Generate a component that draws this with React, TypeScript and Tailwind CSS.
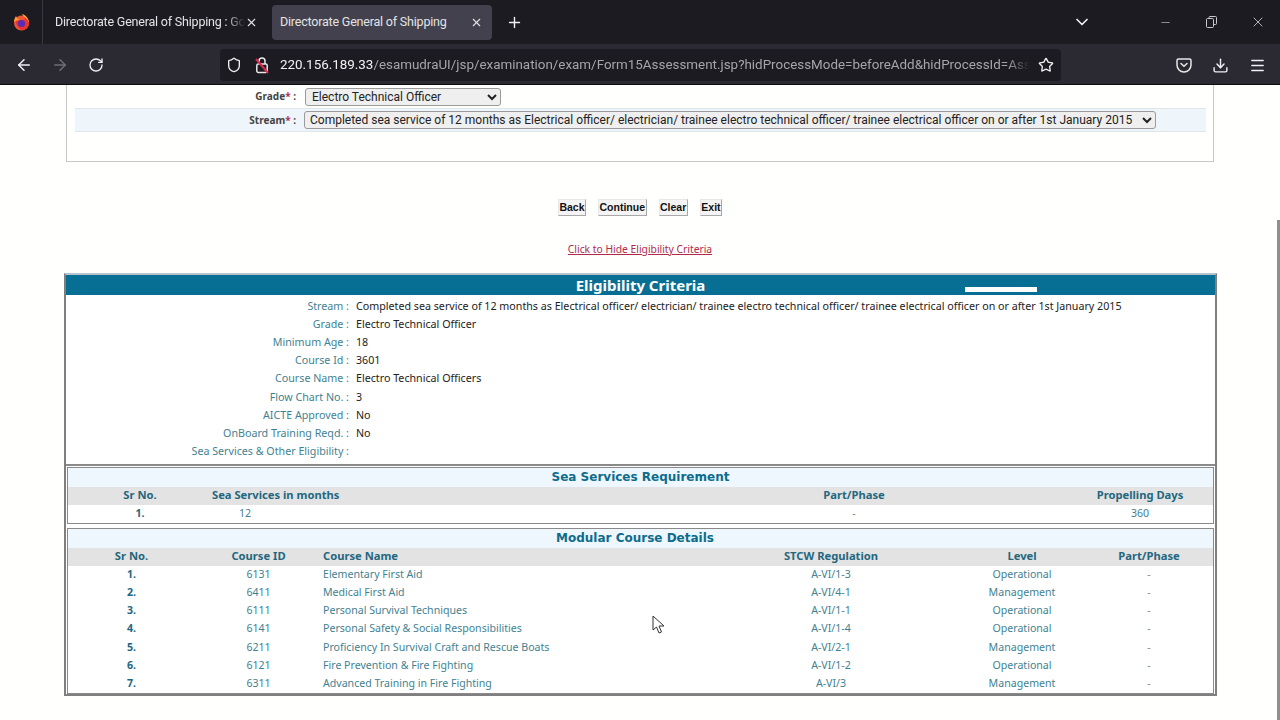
import { ArrowLeft, ArrowRight, RotateCw, Shield, Star, Download, Menu, X, Plus, ChevronDown, Minus } from 'lucide-react';

const details = [
  { label: 'Stream', value: 'Completed sea service of 12 months as Electrical officer/ electrician/ trainee electro technical officer/ trainee electrical officer on or after 1st January 2015' },
  { label: 'Grade', value: 'Electro Technical Officer' },
  { label: 'Minimum Age', value: '18' },
  { label: 'Course Id', value: '3601' },
  { label: 'Course Name', value: 'Electro Technical Officers' },
  { label: 'Flow Chart No.', value: '3' },
  { label: 'AICTE Approved', value: 'No' },
  { label: 'OnBoard Training Reqd.', value: 'No' },
  { label: 'Sea Services & Other Eligibility', value: '' },
];

const courses = [
  ['1.', '6131', 'Elementary First Aid', 'A-VI/1-3', 'Operational'],
  ['2.', '6411', 'Medical First Aid', 'A-VI/4-1', 'Management'],
  ['3.', '6111', 'Personal Survival Techniques', 'A-VI/1-1', 'Operational'],
  ['4.', '6141', 'Personal Safety & Social Responsibilities', 'A-VI/1-4', 'Operational'],
  ['5.', '6211', 'Proficiency In Survival Craft and Rescue Boats', 'A-VI/2-1', 'Management'],
  ['6.', '6121', 'Fire Prevention & Fire Fighting', 'A-VI/1-2', 'Operational'],
  ['7.', '6311', 'Advanced Training in Fire Fighting', 'A-VI/3', 'Management'],
];

function FirefoxLogo() {
  return (
    <svg width="17" height="18" viewBox="0 0 17 18">
      <circle cx="8.5" cy="10" r="7.5" fill="#f0563a" />
      <path d="M2 6 C3 10 3 14 8 17 C13 17.5 16 13.5 16 10 C16 7 14 5 12 3 C12.5 6 11 7 9 7 C7 7 5 8 2 6Z" fill="#e8352f" />
      <path d="M9 1 C10 4 15 5 16 10 C16 6 13 2 9 1Z" fill="#ffb02e" />
      <path d="M1 9 C1 6 2 5 3 3 C3.5 5 5 6 7 6.5 C5 7 3 8 1 9Z" fill="#ff9a2e" />
      <circle cx="8.5" cy="10.5" r="3.6" fill="#5b2bb5" />
    </svg>
  );
}

function InsecureLock() {
  return (
    <svg width="16" height="18" viewBox="0 0 16 18" fill="none">
      <path d="M5 8V5a3 3 0 0 1 6 0v3" stroke="#e8e8ea" strokeWidth="1.5" />
      <rect x="2.8" y="8" width="10.4" height="8.5" rx="1.5" stroke="#e8e8ea" strokeWidth="1.5" />
      <path d="M2 3 L14 17" stroke="#e22850" strokeWidth="2" />
    </svg>
  );
}

function PocketIcon() {
  return (
    <svg width="16" height="16" viewBox="0 0 16 16" fill="none" stroke="#e8e8ea" strokeWidth="1.5">
      <path d="M2.5 2h11A1.5 1.5 0 0 1 15 3.5V8a7 7 0 0 1-14 0V3.5A1.5 1.5 0 0 1 2.5 2Z" />
      <path d="M5 6.5 8 9.3l3-2.8" strokeLinecap="round" strokeLinejoin="round" />
    </svg>
  );
}

function RestoreIcon() {
  return (
    <svg width="11" height="12" viewBox="0 0 11 12" fill="none" stroke="#c9c9cc" strokeWidth="1">
      <rect x="0.5" y="2.5" width="7" height="9" rx="1" />
      <path d="M3 2.5V1.5a1 1 0 0 1 1-1h5.5a1 1 0 0 1 1 1v6a1 1 0 0 1-1 1H7.5" />
    </svg>
  );
}

function Browser() {
  return (
    <div className="font-['Roboto',sans-serif] shrink-0">
      <div className="h-[44px] bg-[#1c1b22] flex items-center text-[#e3e3e6]">
        <div className="w-[43px] h-[44px] flex items-center justify-center border-r border-[#3a3940]">
          <FirefoxLogo />
        </div>
        <div className="w-[229px] h-[36px] flex items-center pl-[12px] text-[12.5px] tracking-[-0.2px]">
          <span className="w-[190px] overflow-hidden whitespace-nowrap [mask-image:linear-gradient(to_right,black_90%,transparent)]">
            Directorate General of Shipping : Government
          </span>
          <X size={13} />
        </div>
        <div className="w-[220px] h-[35px] rounded-[4px] bg-[#42414d] flex items-center justify-between pl-[8px] pr-[9px] text-[12.5px] tracking-[-0.2px]">
          <span>Directorate General of Shipping</span>
          <X size={13} />
        </div>
        <Plus size={17} className="ml-[14px] text-[#f0f0f2]" />
        <div className="flex-1" />
        <ChevronDown size={20} className="text-[#f0f0f2] mr-[67px]" />
        <Minus size={13} strokeWidth={1.2} className="text-[#c9c9cc] mr-[34px]" />
        <RestoreIcon />
        <X size={16} strokeWidth={1.2} className="text-[#dcdcde] ml-[33px] mr-[14px]" />
      </div>
      <div className="h-[41px] pt-[2px] bg-[#2b2a33] border-b border-[#0c0c0d] flex items-center text-[#f0f0f2]">
        <ArrowLeft size={18} className="ml-[15px]" />
        <ArrowRight size={18} className="ml-[18px] text-[#6f6e75]" />
        <RotateCw size={16} className="ml-[19px]" />
        <div className="ml-[116px] w-[841px] h-[32px] rounded-[4px] bg-[#1c1b22] flex items-center pl-[6px]">
          <Shield size={16} />
          <span className="ml-[12px] flex"><InsecureLock /></span>
          <span className="ml-[10px] w-[750px] overflow-hidden whitespace-nowrap text-[13.4px] text-[#a5a5aa] [mask-image:linear-gradient(to_right,black_97%,transparent)]">
            <span className="text-[#f2f2f4]">220.156.189.33</span>/esamudraUI/jsp/examination/exam/Form15Assessment.jsp?hidProcessMode=beforeAdd&amp;hidProcessId=Assessment
          </span>
          <Star size={16} className="ml-[8px]" />
        </div>
        <div className="flex-1" />
        <PocketIcon />
        <Download size={17} className="ml-[20px]" />
        <Menu size={17} className="ml-[20px] mr-[14px]" />
      </div>
    </div>
  );
}

function FormBox() {
  return (
    <div className="mx-[66px] w-[1148px] h-[77px] border border-t-0 border-[#c9c9c9] pl-[8px] pr-[7px]">
      <div className="h-[23px] flex items-center">
        <div className="w-[221px] text-right text-[10px] font-bold text-[#444]">
          Grade<span className="text-[#b03050]">*</span> :
        </div>
        <select className="ml-[9px] w-[196px] h-[18px] border border-[#9a9a9a] rounded-[3px] bg-[#efefef] text-[12px] text-[#222] pl-[2px] font-['Roboto',sans-serif]">
          <option>Electro Technical Officer</option>
        </select>
      </div>
      <div className="h-[24px] bg-[#eef6fb] border-y border-[#dfe6ea] flex items-center">
        <div className="w-[221px] text-right text-[10px] font-bold text-[#444]">
          Stream<span className="text-[#b03050]">*</span> :
        </div>
        <select className="ml-[8px] w-[852px] h-[18px] border border-[#9a9a9a] rounded-[3px] bg-[#efefef] text-[12px] text-[#222] pl-[1px] font-['Roboto',sans-serif]">
          <option>Completed sea service of 12 months as Electrical officer/ electrician/ trainee electro technical officer/ trainee electrical officer on or after 1st January 2015</option>
        </select>
      </div>
    </div>
  );
}

function Actions() {
  return (
    <div className="mt-[37px] flex justify-center gap-[12px]">
      {['Back', 'Continue', 'Clear', 'Exit'].map((label) => (
        <button key={label} className="h-[17px] px-[0.5px] bg-[#f4f4f4] border-r border-b border-[#a8a8a8] border-t border-l border-t-[#e8e8e8] border-l-[#e8e8e8] font-['Liberation_Sans',sans-serif] text-[10.5px] font-bold text-[#111] leading-none">
          {label}
        </button>
      ))}
    </div>
  );
}

function DetailsList() {
  return (
    <div className="pt-[2px] pb-[3px]">
      {details.map((row) => (
        <div key={row.label} className="h-[18.2px] flex items-center text-[10.7px] leading-none">
          <div className="w-[283px] shrink-0 text-right text-[#3f8291] whitespace-nowrap">{row.label} :</div>
          <div className="ml-[7px] grow text-[#222] whitespace-nowrap">{row.value}</div>
        </div>
      ))}
    </div>
  );
}

function SeaServices() {
  return (
    <div className="mx-[1px] border border-[#8a8a8a] text-[10.6px]">
      <div className="h-[19px] bg-[#eef7fd] flex items-center justify-center font-['DejaVu_Sans',sans-serif] text-[12px] font-bold text-[#0d6c8c]">Sea Services Requirement</div>
      <div className="h-[18px] bg-[#e3e3e3] grid grid-cols-[144px_428px_428px_144px] items-center font-bold text-[#23677f] text-[11.2px]">
        <div className="text-center">Sr No.</div>
        <div>Sea Services in months</div>
        <div className="text-center">Part/Phase</div>
        <div className="text-center">Propelling Days</div>
      </div>
      <div className="h-[18px] grid grid-cols-[144px_428px_428px_144px] items-center text-[#3f8291]">
        <div className="text-center font-bold text-[#23677f]">1.</div>
        <div className="pl-[27px]">12</div>
        <div className="text-center text-[#888]">-</div>
        <div className="text-center">360</div>
      </div>
    </div>
  );
}

function ModularCourses() {
  return (
    <div className="mt-[4px] mx-[1px] border border-[#8a8a8a] text-[10.6px]">
      <div className="h-[19px] bg-[#eef7fd] flex items-center justify-center pr-[11px] font-['DejaVu_Sans',sans-serif] text-[12px] font-bold text-[#0d6c8c]">Modular Course Details</div>
      <div className="h-[18px] bg-[#e3e3e3] grid grid-cols-[127px_127px_382px_254px_128px_126px] items-center font-bold text-[#23677f] text-[11.2px]">
        <div className="text-center">Sr No.</div>
        <div className="text-center">Course ID</div>
        <div className="pl-[1px]">Course Name</div>
        <div className="text-center">STCW Regulation</div>
        <div className="text-center">Level</div>
        <div className="text-center">Part/Phase</div>
      </div>
      {courses.map((row) => (
        <div key={row[0]} className="h-[18.2px] grid grid-cols-[127px_127px_382px_254px_128px_126px] items-center text-[#3f8291] whitespace-nowrap">
          <div className="text-center font-bold text-[#23677f]">{row[0]}</div>
          <div className="text-center">{row[1]}</div>
          <div className="pl-[1px]">{row[2]}</div>
          <div className="text-center">{row[3]}</div>
          <div className="text-center">{row[4]}</div>
          <div className="text-center text-[#888]">-</div>
        </div>
      ))}
    </div>
  );
}

function Eligibility() {
  return (
    <div className="mt-[14px] ml-[64px] w-[1153px] border-2 border-[#7f7f7f] border-t-[#b5c4cc] bg-white">
      <div className="h-[20px] bg-[#086f94] relative flex items-center justify-center text-[15px] font-bold text-white">
        Eligibility Criteria
        <div className="absolute left-[899px] top-[12px] w-[72px] h-[5px] bg-white" />
      </div>
      <DetailsList />
      <div className="border-t-2 border-[#8a8a8a] pt-[1px]">
        <SeaServices />
      </div>
      <ModularCourses />
    </div>
  );
}

export default function App() {
  return (
    <div className="w-[1280px] h-[720px] overflow-hidden flex flex-col bg-[#fffffd] relative">
      <Browser />
      <div className="flex-1 overflow-hidden font-['Noto_Sans',sans-serif]">
        <FormBox />
        <Actions />
        <div className="mt-[19px] text-center">
          <a className="text-[10.3px] text-[#b22a4a] underline">Click to Hide Eligibility Criteria</a>
        </div>
        <Eligibility />
      </div>
      {/* scrollbar and mouse pointer lie over the page */}
      <div className="absolute right-0 top-[220px] w-[3px] h-[500px] bg-[#8f8f8f]" />
      <svg className="absolute left-[652px] top-[615px]" width="14" height="20" viewBox="0 0 14 20">
        <path d="M1 1 L1 15 L4.5 12 L7 18 L9.5 17 L7 11 L12 11 Z" fill="#fff" stroke="#333" strokeWidth="1" />
      </svg>
    </div>
  );
}
